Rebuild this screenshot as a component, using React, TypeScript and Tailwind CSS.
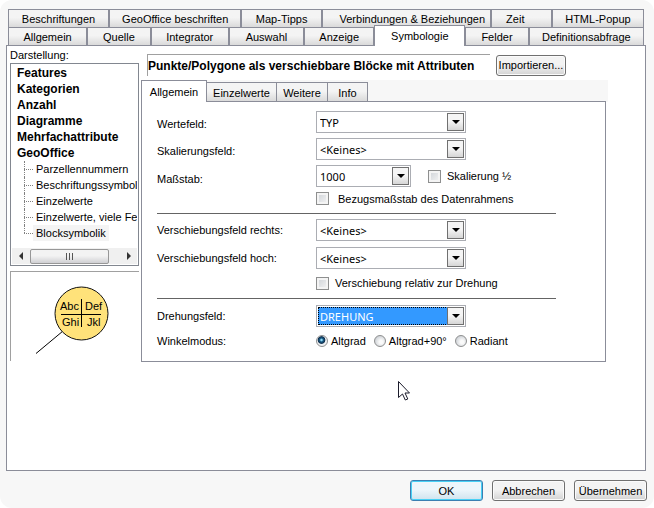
import React, { useState } from "react";
import clsx from "clsx";

const tabClass =
    "flex h-full items-center justify-center whitespace-nowrap border border-[#8b8d99] bg-linear-to-b from-[#f4f4f4] from-45% to-[#dadada] pt-px";

const buttonClass =
    "h-[21px] rounded-[3px] border border-[#707070] bg-linear-to-b from-[#f3f3f3] from-45% to-[#d3d3d3] whitespace-nowrap shadow-[inset_0_0_0_1px_#fbfbfb]";

const topTabs = [
    { label: "Beschriftungen", width: "flex-[101]" },
    { label: "GeoOffice beschriften", width: "flex-[133]" },
    { label: "Map-Tipps", width: "flex-[80]" },
    { label: "Verbindungen & Beziehungen", width: "flex-[158] pl-3" },
    { label: "Zeit", width: "flex-[48] pr-3" },
    { label: "HTML-Popup", width: "flex-[92]" },
];

const bottomTabs = [
    { label: "Allgemein", width: "flex-[79]" },
    { label: "Quelle", width: "flex-[63]" },
    { label: "Integrator", width: "flex-[78]" },
    { label: "Auswahl", width: "flex-[75]" },
    { label: "Anzeige", width: "flex-[70]" },
    { label: "Symbologie", width: "flex-[91]" },
    { label: "Felder", width: "flex-[63]" },
    { label: "Definitionsabfrage", width: "flex-[116]" },
];

const innerTabs = [
    { label: "Allgemein", width: "w-[66px]" },
    { label: "Einzelwerte", width: "w-[70px]" },
    { label: "Weitere", width: "w-[51px]" },
    { label: "Info", width: "w-[40px]" },
];

const categories = ["Features", "Kategorien", "Anzahl", "Diagramme", "Mehrfachattribute", "GeoOffice"];

const geoOfficeItems = [
    "Parzellennummern",
    "Beschriftungssymbolik",
    "Einzelwerte",
    "Einzelwerte, viele Felder",
    "Blocksymbolik",
];

const SelectField = ({ id, options, className, highlighted }: {
    id: string;
    options: string[];
    className?: string;
    highlighted?: boolean;
}) => (
    <div className={clsx("relative flex h-[22px] border border-[#abadb3] bg-white p-px", className)}>
        <select
            id={id}
            className={clsx(
                "w-full appearance-none pr-5 font-['Noto_Sans',sans-serif] text-[11px] leading-none outline-none",
                highlighted
                    ? "border border-dotted border-black bg-[#3399ff] pl-px text-white"
                    : "pl-[2px]"
            )}
        >
            {options.map((option) => (
                <option key={option}>{option}</option>
            ))}
        </select>
        <span className="pointer-events-none absolute inset-y-px right-px flex w-[17px] items-center justify-center border border-[#707070] bg-linear-to-b from-[#f5f5f5] from-45% to-[#d6d6d6]">
            <span className="border-x-4 border-t-4 border-x-transparent border-t-black" />
        </span>
    </div>
);

const CheckField = ({ id, label, className }: { id: string; label: string; className?: string }) => (
    <div className={clsx("flex items-center", className)}>
        <input
            id={id}
            type="checkbox"
            className="size-[13px] shrink-0 appearance-none border border-[#8e8f8f] bg-linear-to-br from-[#cdd1d6] to-[#f6f6f6] shadow-[inset_0_0_0_2px_#f4f4f4] checked:from-[#4b8ec2]"
        />
        <label htmlFor={id}>{label}</label>
    </div>
);

const Sidebar = () => (
    <div className="flex w-[129px] shrink-0 flex-col">
        <div className="h-4">Darstellung:</div>
        <div className="flex h-[203px] flex-col border border-[#828790] p-px">
            <div className="flex-1 overflow-hidden whitespace-nowrap">
                <ul className="pl-[5px] text-[12px] leading-4 font-bold">
                    {categories.map((name) => (
                        <li key={name}>{name}</li>
                    ))}
                </ul>
                <ul className="pl-3">
                    {geoOfficeItems.map((name) => (
                        <li
                            key={name}
                            className="relative flex items-center before:absolute before:inset-y-0 before:left-0 before:border-l before:border-dotted before:border-[#808080] last:before:bottom-1/2"
                        >
                            <span className="w-[9px] shrink-0 border-t border-dotted border-[#808080]" />
                            <span className={clsx("px-[3px]", name === "Blocksymbolik" && "bg-[#f4f4f4]")}>{name}</span>
                        </li>
                    ))}
                </ul>
            </div>
            {/* Horizontal scrollbar */}
            <div className="flex h-4 items-center bg-[#f0f0f0]">
                <span className="flex w-[18px] justify-center">
                    <span className="border-y-4 border-r-4 border-y-transparent border-r-[#333333]" />
                </span>
                <div className="flex h-[15px] w-[79px] items-center justify-center gap-px rounded-[2px] border border-[#979797] bg-linear-to-b from-[#f3f3f3] from-45% to-[#d0d0d3]">
                    <span className="h-[7px] w-[2px] border-l border-[#555555]" />
                    <span className="h-[7px] w-[2px] border-l border-[#555555]" />
                    <span className="h-[7px] w-[2px] border-l border-[#555555]" />
                </div>
                <span className="flex flex-1 justify-end pr-[6px]">
                    <span className="border-y-4 border-l-4 border-y-transparent border-l-[#333333]" />
                </span>
            </div>
        </div>
        <div className="mt-[5px] h-[90px] border-t border-l border-[#a0a0a0]">
            <svg width="127" height="89" viewBox="0 0 127 89" className="text-[11px]">
                <path d="M25 81.500 52 59" stroke="#000" />
                <circle cx="70.500" cy="41.500" r="26.500" fill="#ffe27a" stroke="#111" />
                <path d="M50 42.500H90M70.500 27V55" stroke="#000" />
                <text x="49" y="38">Abc</text>
                <text x="74" y="38">Def</text>
                <text x="51" y="54">Ghi</text>
                <text x="76" y="54">Jkl</text>
            </svg>
        </div>
    </div>
);

const AngleMode = () => {
    const [mode, setMode] = useState<string>("Altgrad");
    return (
        <div className="flex items-center gap-2">
            {["Altgrad", "Altgrad+90°", "Radiant"].map((name) => (
                <div key={name} className="flex items-center gap-[3px]">
                    <input
                        id={name}
                        type="radio"
                        name="winkelmodus"
                        checked={mode === name}
                        onChange={() => setMode(name)}
                        className="size-3 appearance-none rounded-full border border-[#8e8f8f] bg-[radial-gradient(circle_at_60%_60%,#fafafa_20%,#c9cdd2_80%)] checked:bg-[radial-gradient(circle_at_45%_40%,#8fd8f5_8%,#1b5d88_22%,#0f2f4d_42%,#eef0f2_52%)]"
                    />
                    <label htmlFor={name}>{name}</label>
                </div>
            ))}
        </div>
    );
};

const Settings = () => (
    <div className="mr-[39px] border-x border-b border-[#8b8d99] bg-white pt-[9px] pr-[49px] pb-3 pl-[15px]">
        <div className="grid grid-cols-[159px_1fr] gap-y-[5px]">
            <label htmlFor="wertefeld" className="self-center pt-1">Wertefeld:</label>
            <SelectField id="wertefeld" options={["TYP"]} className="w-[150px]" />
            <label htmlFor="skalierungsfeld" className="self-center pt-1">Skalierungsfeld:</label>
            <SelectField id="skalierungsfeld" options={["<Keines>"]} className="w-[150px]" />
            <label htmlFor="massstab" className="self-center pt-[6px]">Maßstab:</label>
            <div className="flex h-[22px] items-center gap-[17px]">
                <SelectField id="massstab" options={["1000"]} className="w-[95px]" />
                <CheckField id="halb" label="Skalierung ½" className="gap-[6px]" />
            </div>
            <CheckField id="bezug" label="Bezugsmaßstab des Datenrahmens" className="col-start-2 h-[13px] gap-[9px]" />
        </div>
        <hr className="mt-2 mb-[5px] border-[#646464]" />
        <div className="grid grid-cols-[159px_1fr] gap-y-[6px]">
            <label htmlFor="rechts" className="self-center">Verschiebungsfeld rechts:</label>
            <SelectField id="rechts" options={["<Keines>"]} className="w-[150px]" />
            <label htmlFor="hoch" className="self-center">Verschiebungsfeld hoch:</label>
            <SelectField id="hoch" options={["<Keines>"]} className="w-[150px]" />
            <CheckField id="relativ" label="Verschiebung relativ zur Drehung" className="col-start-2 gap-[6px]" />
        </div>
        <hr className="mt-[7px] mb-[6px] border-[#646464]" />
        <div className="grid grid-cols-[159px_1fr] gap-y-[6px]">
            <label htmlFor="drehung" className="self-center">Drehungsfeld:</label>
            <SelectField id="drehung" options={["DREHUNG"]} className="w-[150px]" highlighted />
            <span>Winkelmodus:</span>
            <AngleMode />
        </div>
    </div>
);

const App = () => (
    <div className="bg-white">
        <div className="flex min-h-screen flex-col rounded-xl bg-[#f7f7f7] pt-[9px] pr-2 pb-[7px] pl-[6px] font-['Liberation_Sans',Arial,sans-serif] text-[11px] leading-4 text-black">
            <div role="tablist" className="flex h-[18px] px-0.5">
                {topTabs.map(({ label, width }) => (
                    <button key={label} role="tab" className={clsx(tabClass, width, "border-b-0")}>{label}</button>
                ))}
            </div>
            <div role="tablist" className="flex h-[18px] px-0.5">
                {bottomTabs.map(({ label, width }) =>
                    label === "Symbologie" ? (
                        <button
                            key={label}
                            role="tab"
                            aria-selected="true"
                            className={clsx(width, "relative z-10 -mt-0.5 -mb-px border-x border-t border-[#8b8d99] bg-white pb-px whitespace-nowrap")}
                        >
                            {label}
                        </button>
                    ) : (
                        <button key={label} role="tab" className={clsx(tabClass, width, "border-b-0")}>{label}</button>
                    )
                )}
            </div>

            <main className="flex flex-1 border border-[#8b8d99] bg-white pt-px pb-2 pl-[3px]">
                <Sidebar />
                <div className="ml-[2px] flex-1 pt-[7px]">
                    <div className="mr-[79px] flex items-center gap-[6px] pl-[6px]">
                        <h1 className="h-[22px] flex-1 border-t border-l border-[#a0a0a0] text-[12px] leading-[22px] font-bold whitespace-nowrap">
                            Punkte/Polygone als verschiebbare Blöcke mit Attributen
                        </h1>
                        <button className={clsx(buttonClass, "w-[70px]")}>Importieren...</button>
                    </div>
                    <div role="tablist" className="mt-[4px] mr-[37px] flex h-[22px] items-end bg-[#f7f7f7]">
                        {innerTabs.map(({ label, width }, i) =>
                            i === 0 ? (
                                <button key={label} role="tab" aria-selected="true" className={clsx(width, "h-full border-x border-t border-[#8b8d99] bg-white")}>
                                    {label}
                                </button>
                            ) : (
                                <span key={label} className={clsx(width, "h-5")}>
                                    <button role="tab" className={clsx(tabClass, "w-full border-l-0")}>{label}</button>
                                </span>
                            )
                        )}
                        <span className="mr-0.5 flex-1 border-b border-[#8b8d99]" />
                    </div>
                    <Settings />
                </div>
            </main>

            <div className="-mr-px flex justify-end gap-[9px] pt-[9px]">
                <button className="h-[21px] w-[73px] rounded-[3px] border border-[#3c7fb1] bg-linear-to-b from-[#edf6fb] from-45% to-[#cfe3ee] shadow-[inset_0_0_0_1px_#48d0f5]">
                    OK
                </button>
                <button className={clsx(buttonClass, "w-[73px]")}>Abbrechen</button>
                <button className={clsx(buttonClass, "w-[73px]")}>Übernehmen</button>
            </div>
        </div>

        {/* Mouse pointer */}
        <svg className="pointer-events-none absolute top-[381px] left-[398px]" width="13" height="20" viewBox="0 0 13 20">
            <path d="M.5.500V16.500L4.500 13 7.300 19 9.800 18 7 12H11.500Z" fill="#fff" stroke="#1b1b2b" />
        </svg>
    </div>
);

export default App;
